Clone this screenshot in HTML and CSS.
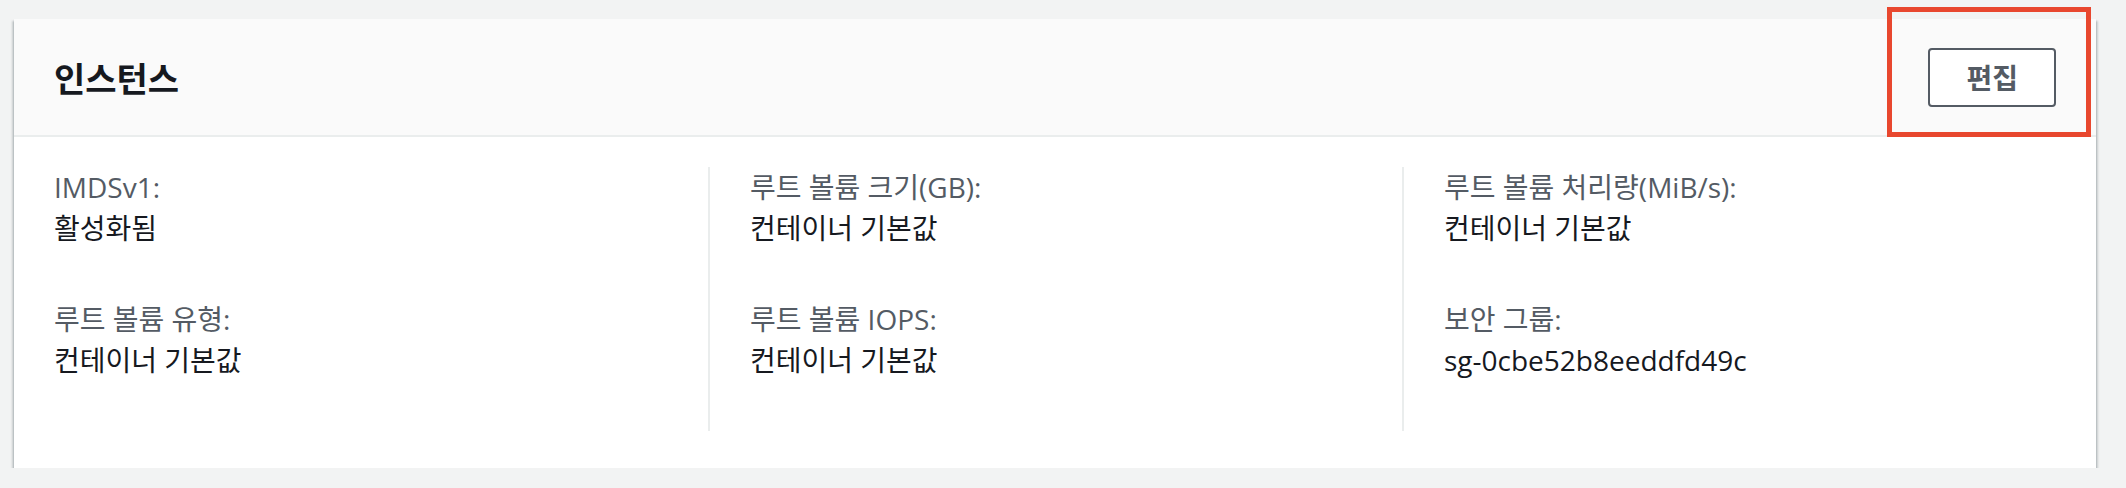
FILE: index.html
```html
<!DOCTYPE html>
<html lang="ko">
  <head>
    <meta charset="UTF-8" />
    <meta name="viewport" content="width=device-width, initial-scale=1.0" />
    <link rel="stylesheet" href="styles.css">
    <title>인스턴스</title>
  </head>
  <body>
    <div class="page">
      <section class="card">
        <div class="card-header">
          <h2>인스턴스</h2>
          <button class="edit-btn">편집</button>
        </div>

        <!-- 강조 표시 -->
        <div class="highlight"></div>

        <div class="card-body">
          <div class="columns">
            <div class="col">
              <div class="item">
                <div class="label">IMDSv1:</div>
                <div class="value">활성화됨</div>
              </div>
              <div class="item">
                <div class="label">루트 볼륨 유형:</div>
                <div class="value">컨테이너 기본값</div>
              </div>
            </div>
            <div class="col">
              <div class="item">
                <div class="label">루트 볼륨 크기(GB):</div>
                <div class="value">컨테이너 기본값</div>
              </div>
              <div class="item">
                <div class="label">루트 볼륨 IOPS:</div>
                <div class="value">컨테이너 기본값</div>
              </div>
            </div>
            <div class="col">
              <div class="item">
                <div class="label">루트 볼륨 처리량(MiB/s):</div>
                <div class="value">컨테이너 기본값</div>
              </div>
              <div class="item">
                <div class="label">보안 그룹:</div>
                <div class="value">sg-0cbe52b8eeddfd49c</div>
              </div>
            </div>
          </div>
        </div>
      </section>
    </div>
  </body>
</html>
```

FILE: styles.css
```css
/* 기본 설정 */
* {
  margin: 0;
  padding: 0;
  box-sizing: border-box;
}

body {
  font-family: "Open Sans", "Noto Sans CJK KR", sans-serif;
  background-color: #f2f3f3;
  color: #16191f;
}

.page {
  padding: 19px 30px 0 14px;
}

/* 카드 */
.card {
  position: relative;
  background-color: #fff;
  box-shadow: 0 2px 2px 0 rgba(0, 28, 36, 0.3), 2px 2px 2px 0 rgba(0, 28, 36, 0.15),
    -2px 2px 2px 0 rgba(0, 28, 36, 0.15);
}

.card-header {
  display: flex;
  align-items: center;
  justify-content: space-between;
  height: 118px;
  padding: 0 40px;
  background-color: #fafafa;
  border-bottom: 2px solid #eaeded;
}

.card-header h2 {
  font-family: "Noto Sans CJK KR", sans-serif;
  font-size: 34px;
  font-weight: bold;
  color: #16191f;
}

.edit-btn {
  font-family: "Noto Sans CJK KR", sans-serif;
  font-size: 28px;
  font-weight: bold;
  line-height: 55px;
  padding: 0 36px;
  color: #545b64;
  background-color: #fff;
  border: 2px solid #545b64;
  border-radius: 4px;
}

.highlight {
  position: absolute;
  top: -12px;
  right: 5px;
  width: 204px;
  height: 130px;
  border: 5px solid #e8472e;
}

/* 본문 */
.card-body {
  padding: 30px 40px 37px;
}

.columns {
  display: grid;
  grid-template-columns: repeat(3, 1fr);
  margin: 0 -40px;
}

.col {
  padding: 0 40px;
}

.col + .col {
  border-left: 2px solid #eaeded;
}

.item {
  font-size: 28px;
  margin-bottom: 50px;
}

.label {
  line-height: 40px;
  color: #545b64;
}

.value {
  line-height: 42px;
  color: #16191f;
}
```
